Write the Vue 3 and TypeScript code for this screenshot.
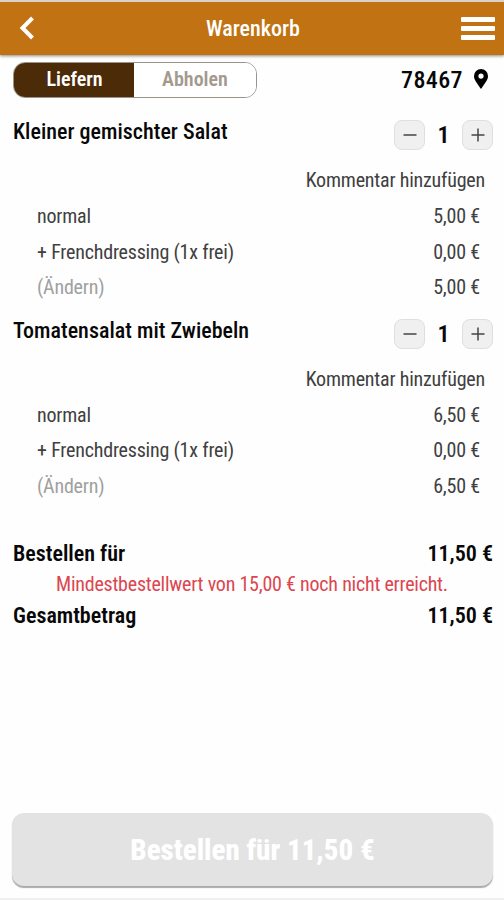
<script setup lang="ts">
import { ref } from 'vue'

interface Line { label: string; price: string; muted?: boolean }
interface Item { name: string; quantity: number; lines: Line[] }

const mode = ref<'deliver' | 'pickup'>('deliver')
const items = ref<Item[]>([
  {
    name: 'Kleiner gemischter Salat',
    quantity: 1,
    lines: [
      { label: 'normal', price: '5,00 €' },
      { label: '+ Frenchdressing (1x frei)', price: '0,00 €' },
      { label: '(Ändern)', price: '5,00 €', muted: true },
    ],
  },
  {
    name: 'Tomatensalat mit Zwiebeln',
    quantity: 1,
    lines: [
      { label: 'normal', price: '6,50 €' },
      { label: '+ Frenchdressing (1x frei)', price: '0,00 €' },
      { label: '(Ändern)', price: '6,50 €', muted: true },
    ],
  },
])
</script>

<template>
  <div class="page">
    <header class="bar">
      <svg class="back" viewBox="0 0 16 24"><path d="M13.5 2 3.5 12l10 10" /></svg>
      <h1>Warenkorb</h1>
      <div class="menu"><i></i><i></i><i></i></div>
    </header>
    <div class="options">
      <div class="toggle">
        <button :class="{ active: mode === 'deliver' }" @click="mode = 'deliver'">Liefern</button>
        <button :class="{ active: mode === 'pickup' }" @click="mode = 'pickup'">Abholen</button>
      </div>
      <div class="place">
        <span>78467</span>
        <svg viewBox="0 0 14 20"><path fill-rule="evenodd" d="M7 0a7 7 0 0 1 7 7c0 4-3 7-7 13C3 14 0 11 0 7a7 7 0 0 1 7-7Zm0 4.5a2.6 2.6 0 1 0 0 5.2 2.6 2.6 0 0 0 0-5.2Z" /></svg>
      </div>
    </div>
    <section v-for="item in items" :key="item.name" class="item">
      <div class="head">
        <h2>{{ item.name }}</h2>
        <div class="stepper">
          <button @click="item.quantity--"><svg viewBox="0 0 14 14"><path d="M.5 7h13" /></svg></button>
          <b>{{ item.quantity }}</b>
          <button @click="item.quantity++"><svg viewBox="0 0 14 14"><path d="M.5 7h13M7 .5v13" /></svg></button>
        </div>
      </div>
      <div class="comment">Kommentar hinzufügen</div>
      <div v-for="line in item.lines" :key="line.label" class="line">
        <span :class="{ muted: line.muted }">{{ line.label }}</span>
        <span>{{ line.price }}</span>
      </div>
    </section>
    <div class="totals">
      <div class="total"><span>Bestellen für</span><span class="sum">11,50 €</span></div>
      <p>Mindestbestellwert von 15,00 € noch nicht erreicht.</p>
      <div class="total"><span class="grand">Gesamtbetrag</span><span class="sum">11,50 €</span></div>
    </div>
    <button class="order" disabled>Bestellen für 11,50 €</button>
    <div class="foot"></div>
  </div>
</template>

<style>
body { margin: 0; background: #fefefe; }
</style>

<style scoped>
* { box-sizing: border-box; }
.page { width: 504px; height: 900px; display: flex; flex-direction: column; overflow: hidden; background: #fefefe; border-top: 2px solid #d9d3cc; color: #080808; font-family: "Roboto Condensed", Roboto, sans-serif; font-stretch: 75%; font-size: 20px; white-space: nowrap; }
button { margin: 0; padding: 0; border: 0; font: inherit; font-stretch: 75%; color: inherit; }
h1, h2, p { margin: 0; }
.bar { flex: none; height: 53px; padding: 0 9px 0 19px; display: grid; grid-template-columns: 26px 1fr 34px; align-items: center; background: #c17213; box-shadow: 0 1px 3px #0007; }
.back { width: 16px; height: 24px; margin-top: -1px; fill: none; stroke: #fff; stroke-width: 4; }
h1 { color: #fff; font-size: 22px; font-weight: 500; text-align: center; }
.menu { display: grid; gap: 4px; }
.menu i { height: 5px; border-radius: 1px; background: #fff; }
.options { flex: none; height: 57px; padding: 7px 16px 0 13px; display: flex; justify-content: space-between; align-items: flex-start; }
.toggle { width: 244px; height: 36px; display: grid; grid-template-columns: 120px 1fr; border: 1px solid #9c9389; border-radius: 12px; overflow: hidden; }
.toggle button { padding-bottom: 2px; background: #fff; color: #a39a8e; font-size: 20px; font-weight: 600; }
.toggle .active { padding-left: 1px; background: #4c2b08; color: #fff; }
.place { height: 36px; display: flex; align-items: center; gap: 11px; font-size: 24px; font-weight: 500; letter-spacing: .4px; }
.place svg { width: 14px; height: 20px; margin-top: -2px; }
.item { flex: none; height: 198.5px; }
.head { height: 50px; padding: 0 11px 0 13px; display: flex; justify-content: space-between; }
h2 { font-size: 22px; line-height: 40px; font-weight: 500; letter-spacing: .02px; }
.stepper { height: 30px; margin-top: 8px; display: grid; grid-template-columns: 31px 37px 31px; align-items: center; text-align: center; }
.stepper button { height: 30px; display: grid; place-items: center; background: #f0f0f0; border: 1px solid #dfdfdf; border-radius: 8px; }
.stepper svg { width: 14px; height: 14px; stroke: #444; stroke-width: 1.5; }
.stepper b { font-size: 24px; font-weight: 600; }
.comment, .line, .totals p { font-weight: 400; letter-spacing: -.2px; }
.comment { height: 36px; line-height: 36px; padding-right: 19px; text-align: right; color: #404040; }
.line { height: 35.5px; line-height: 36px; padding: 0 24px 0 37px; display: flex; justify-content: space-between; color: #404040; }
.muted { color: #a0a0a0; }
.totals { flex: none; height: 304px; padding: 29px 11px 0 13px; }
.total { height: 31px; line-height: 31px; display: flex; justify-content: space-between; font-size: 22px; font-weight: 600; }
.totals p { height: 31px; line-height: 31px; padding-left: 43px; color: #dc4650; letter-spacing: -.23px; }
.order { flex: none; height: 73px; margin: 0 11px 0 12px; border-radius: 12px; background: #e3e3e3; color: #fff; box-shadow: 0 2px 1px #aaa; font-size: 29px; font-weight: 800; }
.foot { height: 2px; margin-top: auto; background: #f0f0f0; }
</style>
